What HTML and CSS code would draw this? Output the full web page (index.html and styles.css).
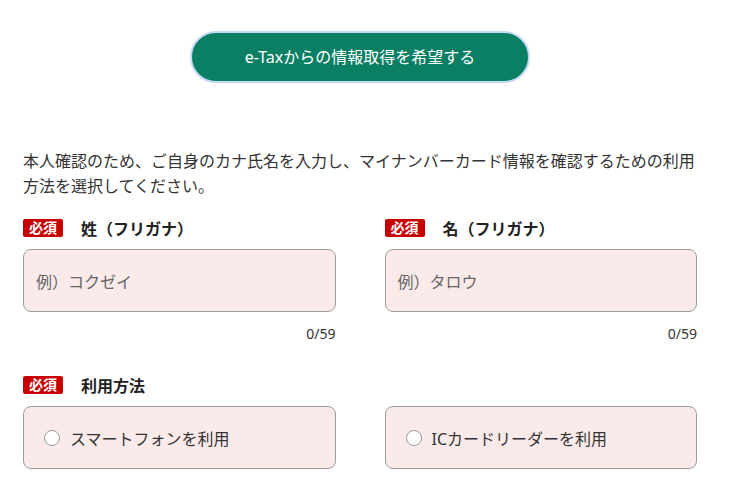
FILE: index.html
```html
<!DOCTYPE html>
<html lang="ja">
<head>
<meta charset="utf-8">
<link rel="stylesheet" href="styles.css">
</head>
<body>
<main class="page">
  <div class="btn-wrap">
    <button class="primary-btn" type="button">e-Taxからの情報取得を希望する</button>
  </div>
  <p class="lead">本人確認のため、ご自身のカナ氏名を入力し、マイナンバーカード情報を確認するための利用方法を選択してください。</p>

  <div class="grid">
    <div class="field">
      <div class="label-row"><span class="badge">必須</span><span class="label">姓（フリガナ）</span></div>
      <div class="input"><span class="placeholder">例）コクゼイ</span></div>
      <div class="counter">0/59</div>
    </div>
    <div class="field">
      <div class="label-row"><span class="badge">必須</span><span class="label">名（フリガナ）</span></div>
      <div class="input"><span class="placeholder">例）タロウ</span></div>
      <div class="counter">0/59</div>
    </div>
  </div>

  <div class="label-row method-label"><span class="badge">必須</span><span class="label">利用方法</span></div>
  <div class="grid">
    <label class="radio-card"><span class="radio"></span><span class="radio-text">スマートフォンを利用</span></label>
    <label class="radio-card"><span class="radio"></span><span class="radio-text">ICカードリーダーを利用</span></label>
  </div>
</main>
</body>
</html>
```

FILE: styles.css
```css
* { box-sizing: border-box; }
html, body { margin: 0; padding: 0; background: #fff; }
body {
  font-family: "Noto Sans", "Noto Sans CJK JP", sans-serif;
  color: #333;
  font-size: 16px;
}
.page {
  width: 674px;
  margin-left: 23px;
  padding-top: 31px;
}
.btn-wrap { display: flex; justify-content: center; }
.primary-btn {
  width: 340px;
  height: 52px;
  border-radius: 26px;
  border: 2px solid #c3d9f5;
  background: #0a7f63;
  color: #fff;
  font-family: inherit;
  font-size: 16px;
  line-height: 1;
  padding: 0;
}
.lead {
  margin: 66px 0 0;
  line-height: 25px;
  font-size: 16px;
  color: #333;
}
.grid {
  display: grid;
  grid-template-columns: 1fr 1fr;
  column-gap: 49px;
}
.label-row {
  display: flex;
  align-items: center;
  height: 20px;
  margin-top: 19px;
}
.badge {
  width: 40px;
  height: 18px;
  background: #c80000;
  color: #fff;
  font-size: 14px;
  font-weight: 700;
  border-radius: 2px;
  display: flex;
  align-items: center;
  justify-content: center;
  line-height: 1;
}
.label {
  margin-left: 18px;
  font-weight: 700;
  color: #222;
  font-size: 16px;
}
.input {
  margin-top: 11px;
  height: 63px;
  background: #fbeaea;
  border: 1px solid #9c9c9c;
  border-radius: 8px;
  display: flex;
  align-items: center;
  padding-left: 12px;
}
.placeholder { color: #666; font-size: 16px; }
.counter {
  margin-top: 12px;
  height: 20px;
  line-height: 20px;
  text-align: right;
  font-size: 14px;
  color: #333;
}
.method-label { margin-top: 31px; }
.radio-card {
  margin-top: 11px;
  height: 63px;
  background: #fbeaea;
  border: 1px solid #9c9c9c;
  border-radius: 8px;
  display: flex;
  align-items: center;
  padding-left: 20px;
}
.radio {
  width: 16px;
  height: 16px;
  border-radius: 50%;
  border: 1px solid #9a9a9a;
  background: #fff;
  flex: none;
}
.radio-text { margin-left: 10px; font-size: 16px; color: #333; }
```
